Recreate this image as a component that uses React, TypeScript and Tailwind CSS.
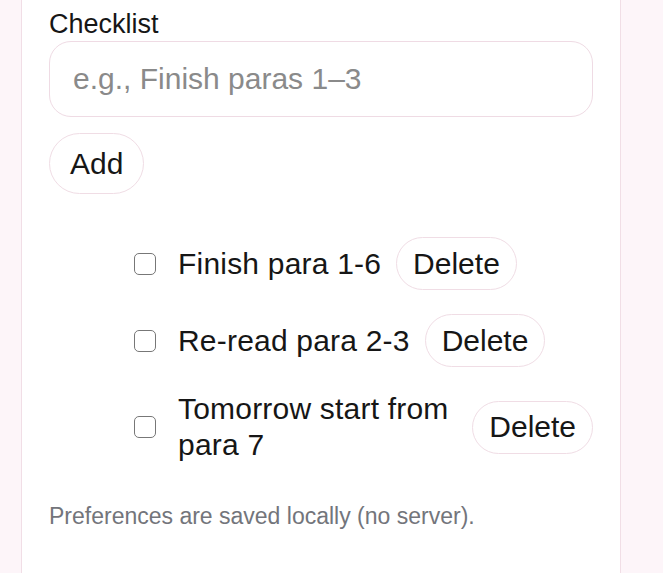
import { useState } from 'react';

type Item = { id: number; text: string; done: boolean };

const initialItems: Item[] = [
  { id: 1, text: 'Finish para 1-6', done: false },
  { id: 2, text: 'Re-read para 2-3', done: false },
  { id: 3, text: 'Tomorrow start from para 7', done: false },
];

export default function App() {
  const [items, setItems] = useState<Item[]>(initialItems);
  const [draft, setDraft] = useState('');

  const addItem = () => {
    if (!draft.trim()) return;
    setItems([...items, { id: Date.now(), text: draft.trim(), done: false }]);
    setDraft('');
  };

  return (
    <div className="min-h-screen bg-[#fdf5f9] font-['Liberation_Sans',Arial,sans-serif] text-[#161616]">
      <div className="ml-[21px] min-h-[573px] w-[600px] border-x border-[#f1dee6] bg-white px-[27px] pt-[8px]">
        <label className="block text-[27px] leading-[32px]">Checklist</label>
        <input
          value={draft}
          onChange={(e) => setDraft(e.target.value)}
          placeholder="e.g., Finish paras 1–3"
          className="mt-[1px] block h-[76px] w-full rounded-[22px] border border-[#efdbe4] px-[23px] text-[30px] outline-none placeholder:text-[#8a8a8a]"
        />
        <button
          onClick={addItem}
          className="mt-[16px] h-[61px] rounded-full border border-[#f0dde5] bg-white px-[20px] text-[30px] leading-[36px]"
        >
          Add
        </button>

        <ul className="mt-[43px] flex flex-col gap-[24px] pl-[85px]">
          {items.map((item) => (
            <li key={item.id} className="flex items-center">
              <input
                type="checkbox"
                checked={item.done}
                onChange={() =>
                  setItems(items.map((i) => (i.id === item.id ? { ...i, done: !i.done } : i)))
                }
                className="h-[22px] w-[22px] shrink-0 appearance-none rounded-[5px] border-[1.5px] border-[#777777] bg-white checked:bg-[#777777]"
              />
              <span className="ml-[22px] text-[30px] leading-[36px] tracking-[0.2px]">{item.text}</span>
              <button
                onClick={() => setItems(items.filter((i) => i.id !== item.id))}
                className="ml-[15px] h-[53px] shrink-0 rounded-full border border-[#f0dde5] bg-white px-[16px] text-[30px] leading-[36px]"
              >
                Delete
              </button>
            </li>
          ))}
        </ul>

        <p className="mt-[37px] text-[23px] leading-[32px] text-[#73757b]">
          Preferences are saved locally (no server).
        </p>
      </div>
    </div>
  );
}
